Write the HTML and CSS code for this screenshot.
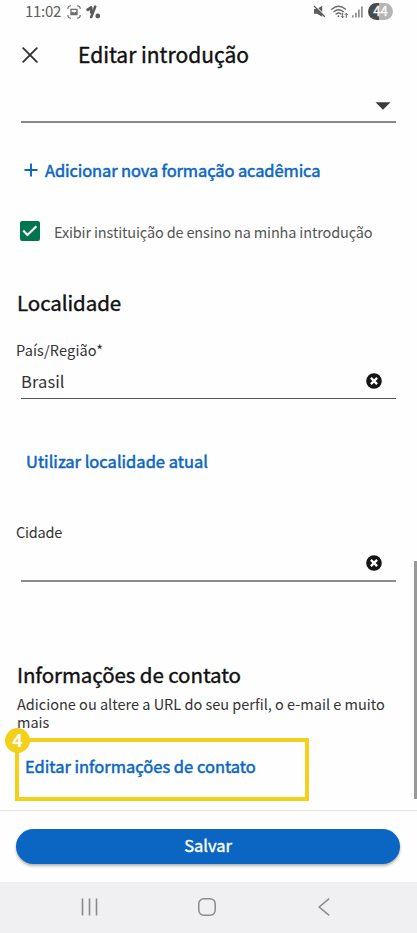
FILE: index.html
```html
<!DOCTYPE html>
<html lang="pt-BR">
<head>
<meta charset="utf-8">
<meta name="viewport" content="width=device-width">
<title>Editar introdução</title>
<link rel="stylesheet" href="styles.css">
</head>
<body>
<div class="screen">
  <header class="status">
    <span class="time">11:02</span>
    <svg class="capture" width="14" height="14" viewBox="0 0 14 14" fill="none" stroke="#6b6b6b" stroke-width="1.1"><path d="M4 .8Q.8.8.8 4M10 .8q3.2 0 3.2 3.2M4 13.2Q.8 13.2.8 10M10 13.2q3.2 0 3.2-3.2"/><path d="M4 4.3h6v5.2H4z" stroke-width="1.3"/><path d="M4 7.6l2-.8 1.3.9L10 6v3.5H4z" fill="#6b6b6b" stroke="none"/></svg>
    <svg class="trend" width="15" height="14" viewBox="0 0 15 14" fill="none" stroke="#5b5b5b" stroke-linecap="round"><path d="M1.7 4.8L4.8 2.8" stroke-width="2.8"/><path d="M5.2 2.6v5M9.2 1.6L5.2 12" stroke-width="2.6"/><circle cx="11.8" cy="11" r="2.4" fill="#5b5b5b" stroke="none"/></svg>
    <svg class="mute" width="13" height="13" viewBox="0 0 13 13"><path d="M1 4h3L9.2.8v11L4 8.8H1z" fill="#5d5d5d"/><path d="M2 .6L12 10.6" stroke="#fefefe" stroke-width="1.2"/><path d="M1 1l10.8 10.8" stroke="#5d5d5d" stroke-width="1.3"/></svg>
    <svg class="wifi" width="18" height="14" viewBox="0 0 18 14" fill="none" stroke="#6b6b6b" stroke-width="1.3" stroke-linecap="round"><path d="M.8 4.3Q7.5-1.7 14.6 4.3M2.9 6.7q4.6-3.9 9.4 0M5.1 9.1q2.5-2.2 5 0"/><circle cx="7.4" cy="11.2" r=".9" fill="#6b6b6b" stroke="none"/><path d="M11.6 8.2v4.4M10.3 11.4l1.3 1.3 1.3-1.3M15.3 12.6V8.4M14 9.6l1.3-1.3 1.3 1.3" stroke-width="1"/></svg>
    <svg class="signal" width="11" height="12" viewBox="0 0 11 12" stroke="#6b6b6b" stroke-width="1.3"><path d="M.9 9.2v2.3M3.9 6.7v4.8M6.9 3.6v7.9M9.9.6v10.9"/></svg>
    <span class="battery">44</span>
  </header>

  <div class="titlebar">
    <svg class="close" width="16" height="16" viewBox="0 0 16 16" stroke="#333" stroke-width="1.9" stroke-linecap="round"><path d="M1.2 1.2l13.6 13.6M14.8 1.2L1.2 14.8"/></svg>
    <h1 class="title">Editar introdução</h1>
  </div>

  <main class="content">
    <div class="select"><svg width="16" height="8" viewBox="0 0 16 8"><path d="M.5.2h15L8 7.8z" fill="#3b3b3b"/></svg></div>

    <a class="link add"><svg width="14" height="14" viewBox="0 0 14 14" stroke="#0a66c2" stroke-width="1.9"><path d="M7 .5v13M.5 7h13"/></svg><span class="add-text">Adicionar nova formação acadêmica</span></a>

    <label class="check">
      <svg width="20" height="20" viewBox="0 0 20 20"><rect width="20" height="20" rx="2" fill="#01754f"/><path d="M3.2 9.6l4.2 4.4 9-8.8" fill="none" stroke="#fff" stroke-width="2.2"/></svg>
      <span class="check-text">Exibir instituição de ensino na minha introdução</span>
    </label>

    <h2 class="heading local">Localidade</h2>
    <div class="label country">País/Região*</div>
    <div class="field">
      <span class="value">Brasil</span>
      <svg width="16" height="16" viewBox="0 0 16 16"><circle cx="8" cy="8" r="7.8" fill="#151515"/><path d="M4.9 4.9l6.2 6.2M11.1 4.9l-6.2 6.2" stroke="#fff" stroke-width="2.3"/></svg>
    </div>

    <a class="link current">Utilizar localidade atual</a>

    <div class="label city">Cidade</div>
    <div class="field empty">
      <span class="value"></span>
      <svg width="16" height="16" viewBox="0 0 16 16"><circle cx="8" cy="8" r="7.8" fill="#151515"/><path d="M4.9 4.9l6.2 6.2M11.1 4.9l-6.2 6.2" stroke="#fff" stroke-width="2.3"/></svg>
    </div>

    <h2 class="heading contact">Informações de contato</h2>
    <p class="desc">Adicione ou altere a URL do seu perfil, o e-mail e muito<br>mais</p>
    <div class="callout"><a class="link edit">Editar informações de contato</a><span class="step">4</span></div>
    <div class="scrollbar"></div>
  </main>

  <footer class="actions"><button class="save">Salvar</button></footer>

  <nav class="nav">
    <svg width="18" height="18" viewBox="0 0 18 18" stroke="#8a8a8d" stroke-width="1.6"><path d="M1.5.5v17M8.5.5v17M15.5.5v17"/></svg>
    <svg width="18" height="18" viewBox="0 0 18 18" fill="none" stroke="#8a8a8d" stroke-width="1.5"><rect x=".8" y=".8" width="16.4" height="16.4" rx="5"/></svg>
    <svg class="back" width="12" height="18" viewBox="0 0 12 18" fill="none" stroke="#8a8a8d" stroke-width="1.5"><path d="M11.2.7L1.2 9l10 8.3"/></svg>
  </nav>
</div>
</body>
</html>
```

FILE: styles.css
```css
* { box-sizing: border-box; margin: 0; padding: 0; }
body { background: #fefefe; font-family: "Noto Sans CJK JP", "Noto Sans", sans-serif; font-weight: 400; color: #333; }
svg { display: block; flex: none; }
.screen { width: 417px; height: 933px; display: flex; flex-direction: column; overflow: hidden; }

.status { height: 24px; display: flex; align-items: center; padding: 0 24px 1px 25px; }
.time { width: 42px; font-size: 15px; line-height: 22px; letter-spacing: -0.3px; color: #606060; white-space: nowrap; margin-top: -2px; }
.trend { margin-left: 5px; }
.mute { margin-left: auto; }
.wifi { margin-left: 5px; }
.signal { margin-left: 3px; }
.battery { margin-left: 5px; width: 25px; height: 17px; border-radius: 9px; background: linear-gradient(90deg, #4b4b4b 44%, #b5b5b5 44%); color: #fff; font-size: 13px; line-height: 15px; text-align: center; -webkit-text-stroke: 0.3px #fff; }

.titlebar { height: 60px; display: flex; align-items: center; padding: 2px 0 0 22px; }
.title { margin: -2px 0 0 40px; font-size: 21px; line-height: 30px; font-weight: 400; color: #111; -webkit-text-stroke: 0.4px #111; white-space: nowrap; }

.content { position: relative; height: 727px; border-bottom: 1px solid #e4e4e4; }
.select { height: 39px; margin: 0 21px 0 21px; border-bottom: 2px solid #888; display: flex; justify-content: flex-end; padding: 18px 5px 0 0; }
.link { color: #0a66c2; font-size: 16.5px; line-height: 24px; -webkit-text-stroke: 0.5px #0a66c2; white-space: nowrap; display: block; }
.add { display: flex; align-items: center; margin: 35px 0 0 24px; }
.add-text { margin-left: 7px; letter-spacing: -0.12px; }
.check { display: flex; align-items: center; height: 24px; margin: 37px 0 0 20px; }
.check-text { margin: 2px 0 0 14px; font-size: 14.5px; color: #555; letter-spacing: -0.15px; line-height: 22px; white-space: nowrap; }
.heading { margin-left: 17px; font-size: 20.5px; line-height: 30px; font-weight: 400; color: #111; -webkit-text-stroke: 0.4px #111; white-space: nowrap; letter-spacing: -0.08px; }
.local { margin-top: 44px; }
.label { margin-left: 16px; font-size: 14.5px; line-height: 22px; letter-spacing: 0.15px; }
.country { margin-top: 22px; }
.field { display: flex; align-items: center; justify-content: space-between; height: 38px; margin: 0 21px 0 21px; padding: 3px 14px 0 0; border-bottom: 1px solid #555; }
.value { font-size: 16.5px; line-height: 24px; letter-spacing: 0.1px; }
.current { margin: 50px 0 0 26px; }
.city { margin-top: 48px; letter-spacing: -0.25px; }
.empty { height: 39px; border-bottom: 2px solid #8c8c8c; }
.contact { margin-top: 77px; }
.desc { margin: 6px 0 0 17px; font-size: 14.5px; line-height: 18px; white-space: nowrap; }
.callout { position: relative; width: 294px; height: 63px; margin: 7px 0 0 15px; border: 4px solid #f3d11a; padding: 12px 0 0 6px; }
.step { position: absolute; left: -14px; top: -14px; width: 25px; height: 25px; border-radius: 50%; background: #f3d11a; color: #fff; font: 700 18px/24px "Noto Sans", sans-serif; text-align: center; }
.scrollbar { position: absolute; right: 0; top: 477px; width: 3px; height: 238px; background: #999; }

.actions { height: 71px; padding: 18px 16px 0; }
.save { display: block; width: 384px; height: 35px; border: 0; border-radius: 18px; background: #0a66c2; box-shadow: 0 2px 3px rgba(0, 0, 0, 0.3); color: #fff; font-family: inherit; font-size: 16.5px; line-height: 33px; padding-bottom: 2px; -webkit-text-stroke: 0.4px #fff; }
.nav { height: 51px; background: #f0f0f2; display: grid; grid-template-columns: 18px 18px 12px; justify-content: start; column-gap: 99px; align-items: center; padding: 0 0 1px 81px; }
.back { margin-left: 3px; }
```
